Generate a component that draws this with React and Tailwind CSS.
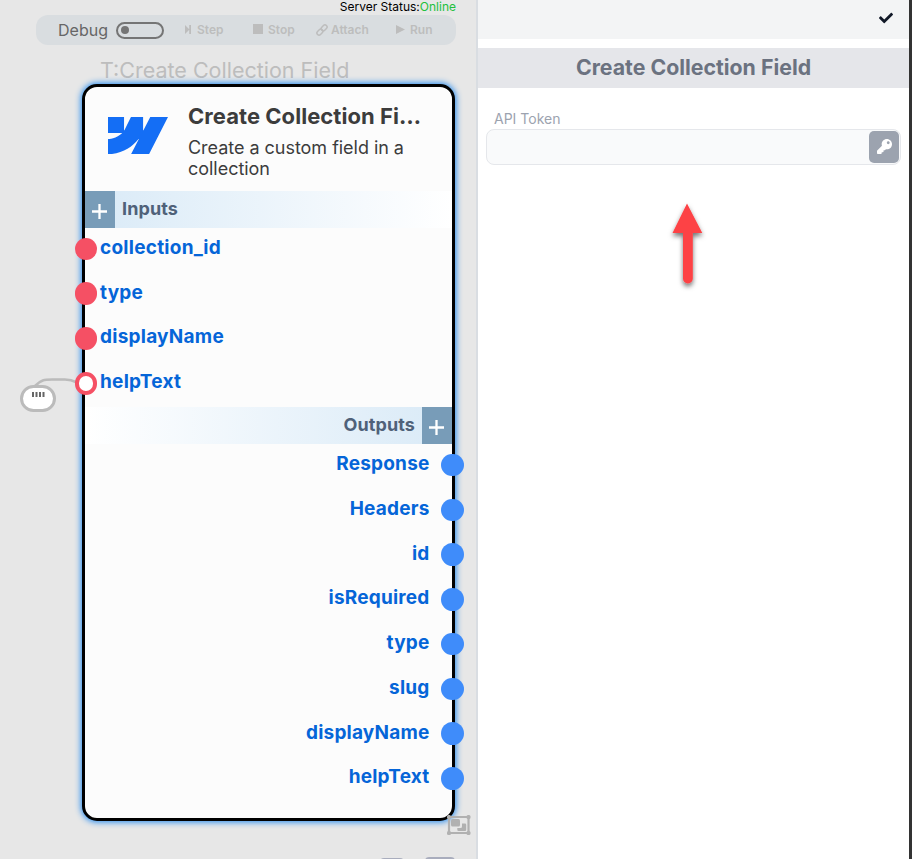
import React from "react";
import { FaCheck, FaKey } from "react-icons/fa";

const inputs = [
  { name: "collection_id" },
  { name: "type" },
  { name: "displayName" },
  { name: "helpText", connected: true },
];

const outputs = ["Response", "Headers", "id", "isRequired", "type", "slug", "displayName", "helpText"];

function Toolbar() {
  return (
    <div className="ml-9 mt-[1px] flex h-[30px] w-[420px] items-center rounded-[12px] bg-[#d9dde0] text-[#bdbdbd]">
      <span className="ml-[22px] w-[58px] whitespace-nowrap pb-[1px] text-[16px] leading-none text-[#666]">Debug</span>
      <span className="flex h-[17px] w-12 items-center rounded-full border-2 border-[#757575] pl-[3px]">
        <span className="size-2 rounded-full bg-[#757575]" />
      </span>
      <span className="ml-[21px] flex w-[68px] items-center text-[12px] font-semibold">
        <svg className="mr-[6px] mb-[2px] h-[9px] w-[6px]" viewBox="0 0 6 9" fill="#bdbdbd">
          <path d="M0 0l4.500 4.500L0 9zM4.200 0H6v9H4.200z" />
        </svg>
        Step
      </span>
      <span className="flex w-[63px] items-center text-[12px] font-semibold">
        <span className="mr-[5px] mb-[2px] size-[10px] bg-[#bdbdbd]" />
        Stop
      </span>
      <span className="flex w-[80px] items-center text-[12px] font-semibold">
        <svg className="mr-[3px] mb-[1px] size-3" viewBox="0 0 12 12" fill="none" stroke="#bdbdbd" strokeWidth="1.5">
          <rect x="-3.300" y="-2.100" width="6.600" height="4.200" rx="2.100" transform="translate(3.900 8.100) rotate(-45)" />
          <rect x="-3.300" y="-2.100" width="6.600" height="4.200" rx="2.100" transform="translate(8.100 3.900) rotate(-45)" />
        </svg>
        Attach
      </span>
      <span className="flex items-center text-[12px] font-semibold">
        <svg className="mr-[5px] mb-[2px] h-[9px] w-[9px]" viewBox="0 0 8 9" preserveAspectRatio="none" fill="#bdbdbd">
          <path d="M0 0l8 4.500L0 9z" />
        </svg>
        Run
      </span>
    </div>
  );
}

function Plus() {
  return (
    <span className="flex h-full w-[30px] shrink-0 items-center justify-center bg-[#789cb8]">
      <svg className="mt-[3px] mr-[1px] size-[15px]" viewBox="0 0 15 15" stroke="#fff" strokeWidth="2.300">
        <path d="M7.500 0v15M0 7.500h15" />
      </svg>
    </span>
  );
}

function NodeCard() {
  return (
    <div className="absolute left-[82px] top-[84px] h-[736.500px] w-[373px] rounded-[15px] border-[3px] border-black bg-[#fcfcfc] shadow-[0_0_6px_1px_#1e88f0]">
      <div className="flex h-[104px] pl-[22.500px]">
        <svg className="mt-[29.500px] h-[37.500px] w-[60px] shrink-0" viewBox="0 4.515 24 14.97" preserveAspectRatio="none" fill="#146ef5">
          <path d="m24 4.515-7.658 14.97H9.149l3.205-6.204h-.144C9.566 16.713 5.621 18.973 0 19.485v-6.118s3.596-.213 5.710-2.435H0V4.515h6.417v5.278l.144-.001 2.622-5.277h4.854v5.244h.144l2.720-5.244H24Z" />
        </svg>
        <div className="ml-[20.500px] pt-[15px] text-[#3c3c3c]">
          <div className="whitespace-nowrap text-[22px] font-bold leading-[28px] tracking-[0.05px]">Create Collection Fi…</div>
          <div className="mt-[7px] w-[230px] text-[18px] leading-[21px] tracking-[-0.03px]">Create a custom field in a collection</div>
        </div>
      </div>
      <div className="flex h-[37px] items-center bg-gradient-to-r from-[#d9eaf7] to-white text-[18px] font-bold tracking-[0.1px] text-[#4f6179]">
        <Plus />
        <span className="mb-[2px] ml-[7px]">Inputs</span>
      </div>
      <div className="-mt-[1.500px]">
        {inputs.map((port) => (
          <div key={port.name} className="flex h-[44.800px] items-center">
            <span className={port.connected ? "-ml-[10.500px] size-[22.500px] rounded-full border-[4px] border-[#f55064] bg-white" : "-ml-[10.500px] size-[22.500px] rounded-full bg-[#f55064]"} />
            <span className="mb-[3px] ml-[3px] text-[19px] font-bold leading-none tracking-[0.250px] text-[#0565d8]">{port.name}</span>
          </div>
        ))}
      </div>
      <div className="mt-[1.500px] flex h-[37px] items-center justify-end bg-gradient-to-l from-[#d9eaf7] to-white text-[18px] font-bold tracking-[0.1px] text-[#4f6179]">
        <span className="mb-[2px] mr-[7px]">Outputs</span>
        <Plus />
      </div>
      <div className="-mt-[1.500px]">
        {outputs.map((name) => (
          <div key={name} className="flex h-[44.750px] items-center justify-end">
            <span className="mb-[3px] mr-[11.500px] text-[19px] font-bold leading-none tracking-[0.200px] text-[#0565d8]">{name}</span>
            <span className="-mr-[11.500px] size-[22.500px] rounded-full bg-[#3f8cfa]" />
          </div>
        ))}
      </div>
    </div>
  );
}

function Canvas() {
  return (
    <section className="relative h-full w-[478px] shrink-0 overflow-hidden border-r-2 border-[#d9dde2] bg-[#e7e7e7]">
      <div className="h-[14px] pr-5 text-right text-[12px] leading-[14px] text-black">
        Server Status:<span className="text-[#22c03c]">Online</span>
      </div>
      <Toolbar />
      <div className="absolute left-[100px] top-[57px] whitespace-nowrap text-[21.500px] leading-[26px] text-[#bdbdbd]">T:Create Collection Field</div>
      <svg className="absolute left-0 top-[370px] h-[50px] w-[80px]" fill="none" stroke="#bbb" strokeWidth="2.600">
        <path d="M35 16C41 10 44 9.500 52 9.500H65C70 9.500 72 10 77 12.500" />
      </svg>
      <NodeCard />
      <div className="absolute left-5 top-[385px] flex h-[27px] w-9 justify-center rounded-[14px] border-[3px] border-[#bbb] bg-white pt-[4px]">
        <svg className="h-[5px] w-[13px]" viewBox="0 0 13 5" stroke="#666" strokeWidth="2">
          <path d="M1 0v5M4.500 0v5M8 0v5M11.500 0v5" />
        </svg>
      </div>
      <svg className="absolute left-[446px] top-[814px] h-[22px] w-[25px]" viewBox="0 0 25 22" fill="#b1b1b1">
        <path d="M3 3h19.500v16H3z" fill="none" stroke="#b1b1b1" strokeWidth="2.200" />
        <rect x="1" y="1" width="4" height="4" rx="1.500" />
        <rect x="20.500" y="1" width="4" height="4" rx="1.500" />
        <rect x="1" y="17" width="4" height="4" rx="1.500" />
        <rect x="20.500" y="17" width="4" height="4" rx="1.500" />
        <rect x="5" y="5" width="9" height="7.500" rx="1.500" />
        <path d="M16 9.500h3a1.200 1.200 0 0 1 1.200 1.200v5.100a1.200 1.200 0 0 1-1.200 1.200h-6.500a1.200 1.200 0 0 1-1.200-1.200V14H14.500a1.500 1.500 0 0 0 1.500-1.500z" />
      </svg>
      <div className="absolute left-[380px] top-[858px] h-4 w-6 rounded-sm bg-[#a9adbd]" />
      <div className="absolute left-[425px] top-[857px] h-4 w-[30px] rounded-[4px] bg-[#a9adbd]" />
    </section>
  );
}

function Inspector() {
  return (
    <section className="relative flex h-full min-w-0 flex-1 flex-col border-r-[3px] border-[#333] bg-white">
      <div className="flex h-[39px] shrink-0 justify-end bg-[#f3f4f5] pr-4 pt-[11px]">
        <FaCheck className="size-[14px] text-[#111827]" />
      </div>
      <h1 className="mt-[9px] h-10 shrink-0 bg-[#e5e6ea] text-center text-[21.300px] font-bold leading-[38px] text-[#6b7280]">Create Collection Field</h1>
      <label className="ml-4 mt-[22px] text-[14px] leading-[18px] text-[#9ca3af]">API Token</label>
      <div className="ml-2 mr-2 mt-[1px] flex h-9 items-center justify-end rounded-lg border border-[#e5e7eb] bg-[#f9fafb] pr-[1px]">
        <button className="flex h-8 w-[30px] items-center justify-center rounded-[5px] bg-[#9ca3af]">
          <FaKey className="mb-[2px] size-[15px] text-white" />
        </button>
      </div>
      <svg className="absolute left-[187px] top-[196px] h-[100px] w-[46px]" viewBox="0 0 46 100">
        <defs>
          <filter id="arrowShadow" x="-50%" y="-20%" width="200%" height="150%">
            <feDropShadow dx="0" dy="3" stdDeviation="2.500" floodColor="#000" floodOpacity="0.55" />
          </filter>
        </defs>
        <path d="M22 7.500L37.300 37H27.800V82.500a4.900 4.900 0 0 1-9.800 0V37H7.500z" fill="#fd4245" filter="url(#arrowShadow)" />
      </svg>
    </section>
  );
}

export default function App() {
  return (
    <main className="flex h-[859px] w-[912px] overflow-hidden font-['Inter',sans-serif]">
      <Canvas />
      <Inspector />
    </main>
  );
}
